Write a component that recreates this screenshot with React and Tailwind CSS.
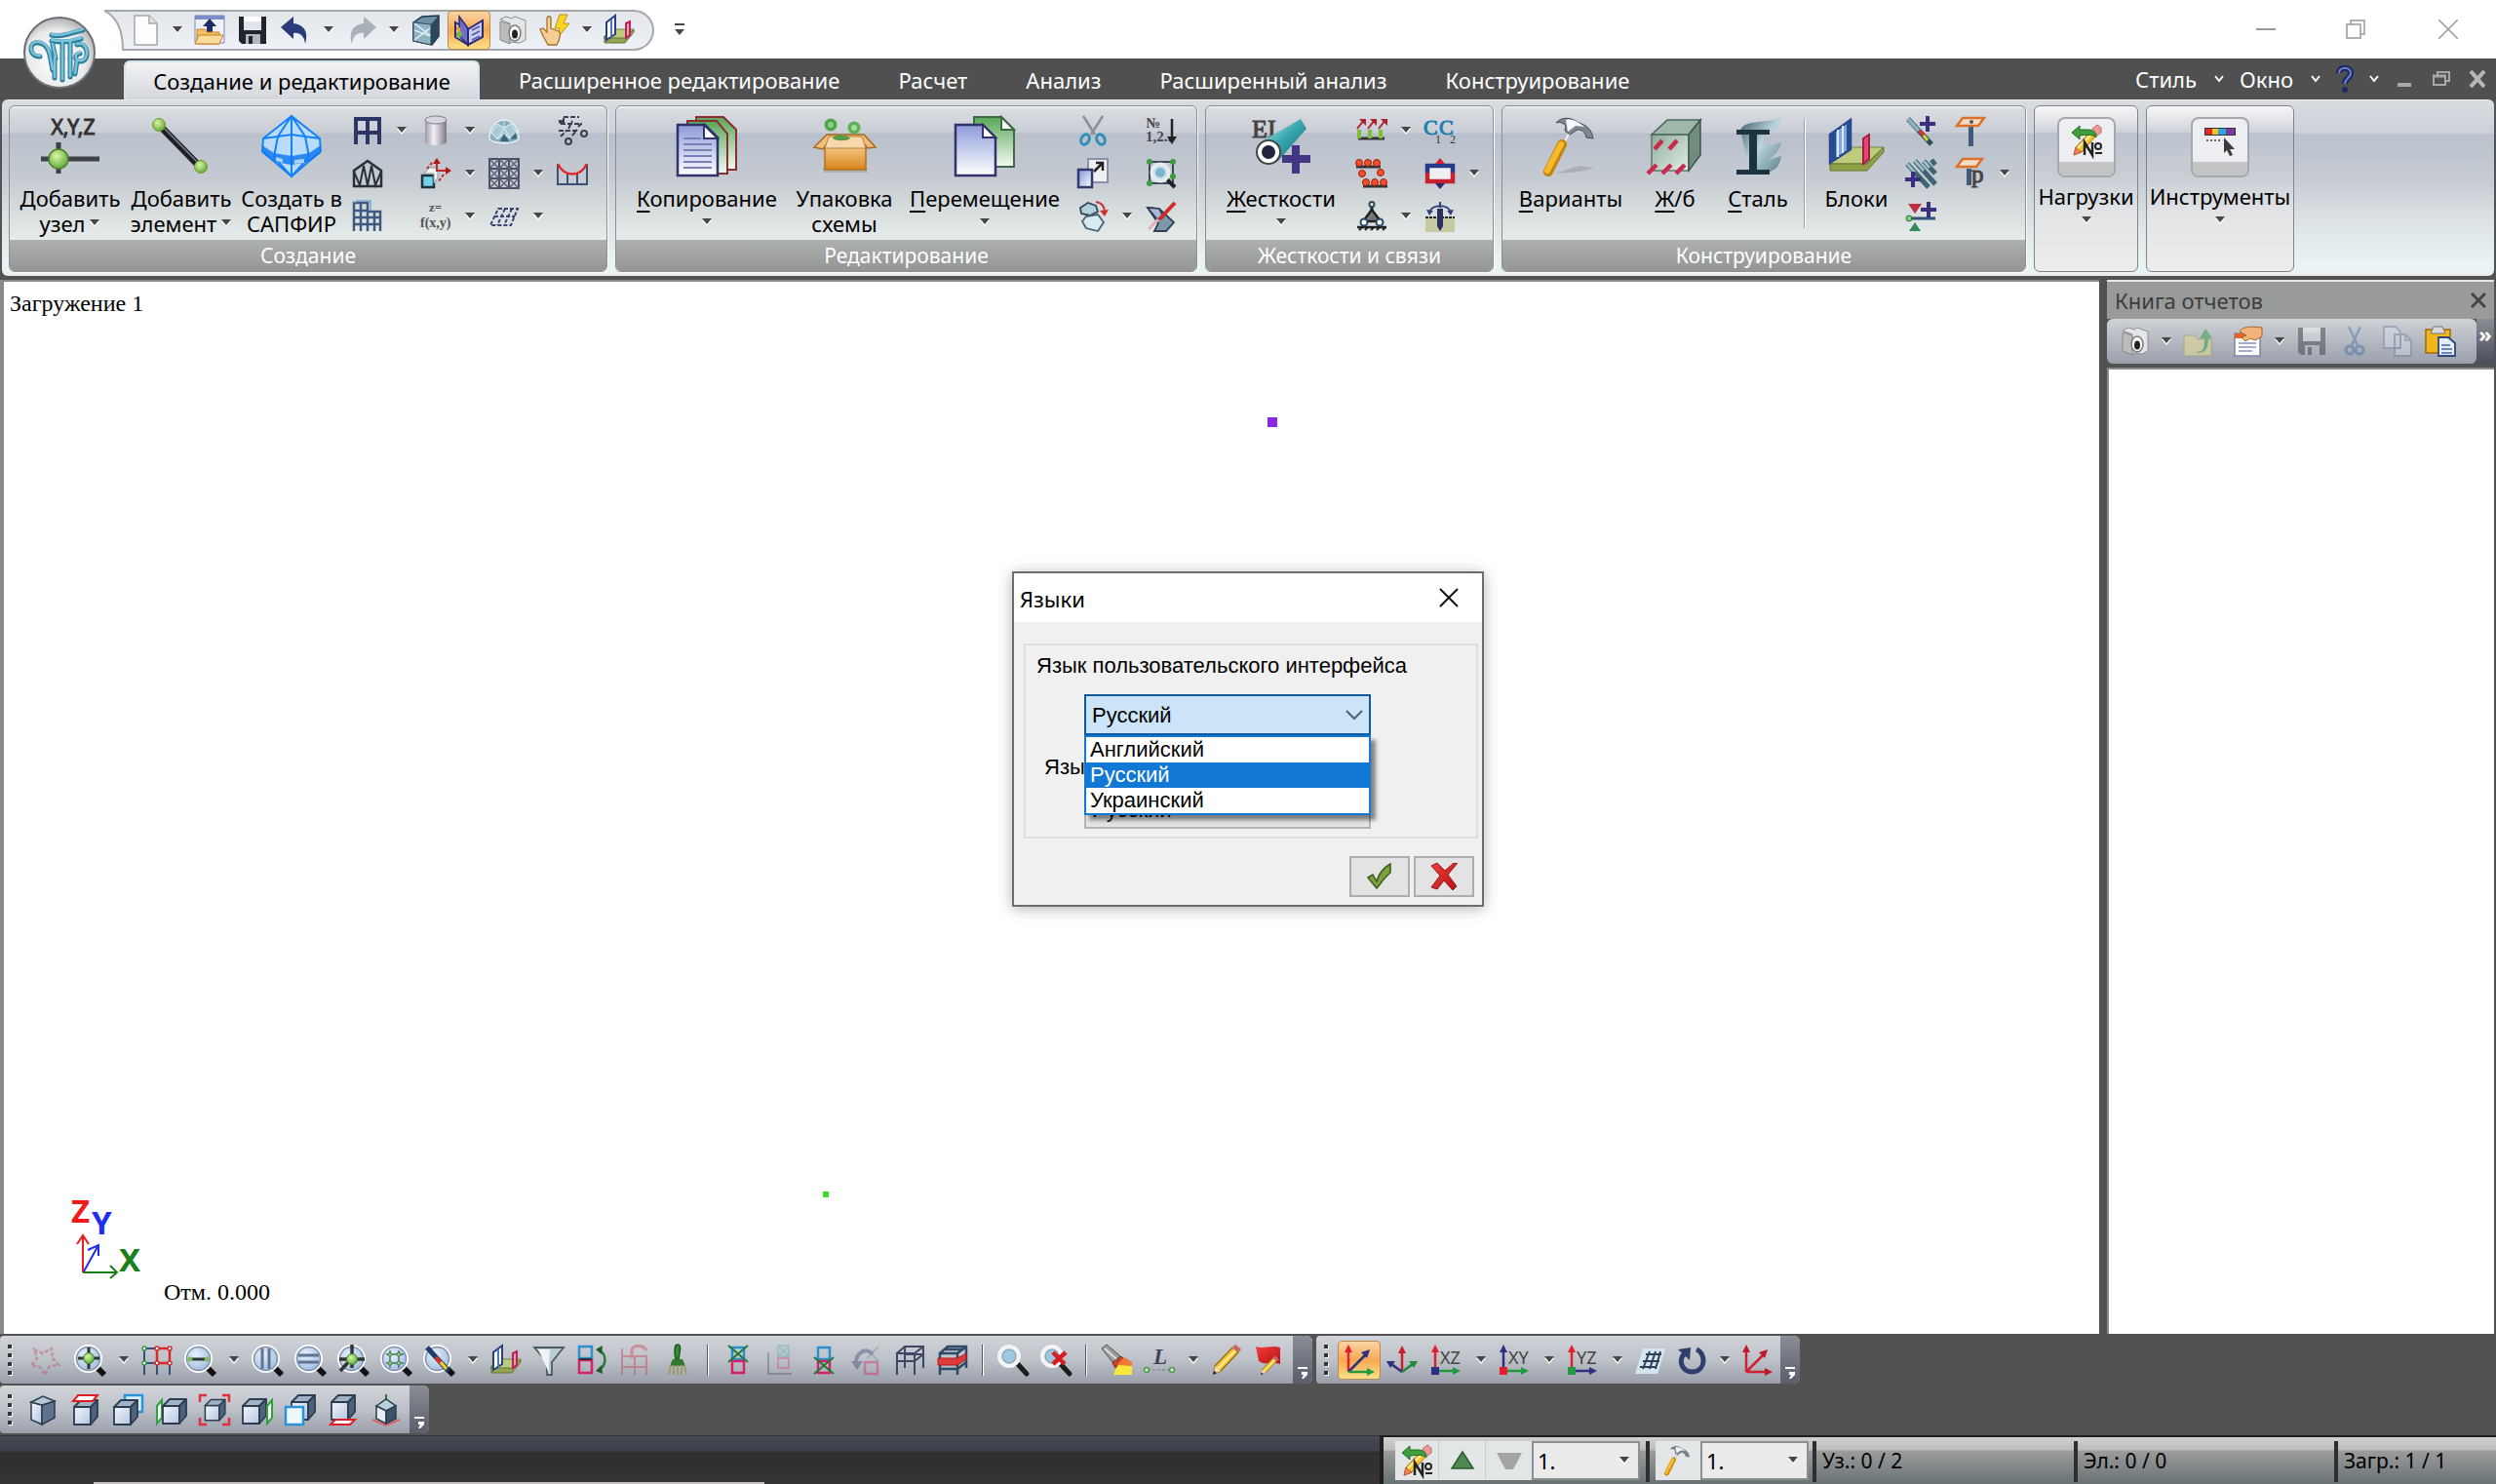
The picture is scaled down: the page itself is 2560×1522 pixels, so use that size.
import React from "react";

const Defs = () => (
  <svg width="0" height="0" className="absolute" aria-hidden="true">
    <defs>
      <linearGradient id="gBlue" x1="0" y1="0" x2="1" y2="1"><stop offset="0" stopColor="#7f95d6" /><stop offset="1" stopColor="#ffffff" /></linearGradient>
      <linearGradient id="gPage" x1="0" y1="0" x2="0" y2="1"><stop offset="0" stopColor="#8c9bd8" /><stop offset="1" stopColor="#ffffff" /></linearGradient>
      <linearGradient id="gPageG" x1="0" y1="0" x2="0" y2="1"><stop offset="0" stopColor="#58a858" /><stop offset="1" stopColor="#f4fbf4" /></linearGradient>
      <linearGradient id="gSteel" x1="0" y1="0" x2="1" y2="0"><stop offset="0" stopColor="#9c97a6" /><stop offset=".4" stopColor="#f4f2f6" /><stop offset="1" stopColor="#7d7886" /></linearGradient>
      <linearGradient id="gOrange" x1="0" y1="0" x2="0" y2="1"><stop offset="0" stopColor="#f7c98a" /><stop offset="1" stopColor="#d88418" /></linearGradient>
      <radialGradient id="gGreen" cx=".4" cy=".35" r=".7"><stop offset="0" stopColor="#d8f7a0" /><stop offset="1" stopColor="#5aa53a" /></radialGradient>
      <radialGradient id="gLens" cx=".4" cy=".35" r=".8"><stop offset="0" stopColor="#e8f1fb" /><stop offset="1" stopColor="#8fb0dc" /></radialGradient>
      <radialGradient id="gLogo" cx=".45" cy=".6" r=".65"><stop offset="0" stopColor="#ffffff" /><stop offset=".65" stopColor="#e9eaec" /><stop offset="1" stopColor="#a3a5a8" /></radialGradient>
      <linearGradient id="gCube" x1="0" y1="0" x2="1" y2="1"><stop offset="0" stopColor="#f4f8ff" /><stop offset="1" stopColor="#b4c3dc" /></linearGradient>
      <linearGradient id="gTeal" x1="0" y1="0" x2="1" y2="1"><stop offset="0" stopColor="#c8f2f4" /><stop offset=".5" stopColor="#35a5ad" /><stop offset="1" stopColor="#146a74" /></linearGradient>
      <linearGradient id="gBeam" x1="0" y1="0" x2="1" y2="1"><stop offset="0" stopColor="#3d5a66" /><stop offset=".5" stopColor="#b9d5dd" /><stop offset="1" stopColor="#5d7f8b" /></linearGradient>
      <linearGradient id="gConc" x1="0" y1="0" x2="1" y2="1"><stop offset="0" stopColor="#8eac9a" /><stop offset="1" stopColor="#e3efe8" /></linearGradient>
      <linearGradient id="gRed" x1="0" y1="0" x2="1" y2="1"><stop offset="0" stopColor="#f0403a" /><stop offset="1" stopColor="#b80f14" /></linearGradient>
      <linearGradient id="gQat" x1="0" y1="0" x2="0" y2="1"><stop offset="0" stopColor="#e3e7ec" /><stop offset="1" stopColor="#eef1f5" /></linearGradient>
    </defs>
  </svg>
);

const Svg = ({ children, size = "w-8 h-8", box = "0 0 32 32", faded, half }) => (
  <svg viewBox={box} className={`${size} shrink-0 overflow-visible ${faded ? "opacity-40" : ""} ${half ? "opacity-70" : ""}`} fill="none" aria-hidden="true">{children}</svg>
);

const Mag = ({ children }) => (
  <>
    <path d="M23 23l8 8" stroke="#111" strokeWidth="6" />
    <circle cx="14.500" cy="14.500" r="13" fill="url(#gLens)" stroke="#fff" strokeWidth="3" />
    <circle cx="14.500" cy="14.500" r="12" stroke="#7d8fa8" strokeWidth="1.500" />
    {children}
  </>
);

const Cube = ({ x = 3, y = 4 }) => (
  <g transform={`translate(${x} ${y})`} stroke="#2d3c50" strokeWidth="1.800" strokeLinejoin="round">
    <path d="M1 8h17v18H1z" fill="url(#gCube)" />
    <path d="M1 8l7-7h17l-7 7z" fill="#9fb2c6" />
    <path d="M18 8l7-7v17l-7 8z" fill="#4d637c" />
  </g>
);

const Axes = ({ up, right, dot, label }) => (
  <>
    <path d="M4 27V6" stroke={up} strokeWidth="2.500" /><path d="M0 8l4-8 4 8z" fill={up} />
    <path d="M4 27h20" stroke={right} strokeWidth="2.500" /><path d="M22 23l8 4-8 4z" fill={right} />
    <path d="M0 23h8v8H0z" fill={dot} />
    <text x="9" y="20" fontSize="18" fontFamily="Noto Sans" fill="#444">{label}</text>
  </>
);

const Disk = () => (
  <>
    <path d="M2 2h28v28H5l-3-3z" fill="#22262c" />
    <path d="M7 2h18v14H7z" fill="#dfe5ea" /><path d="M7 2h18v5H7z" fill="#fff" />
    <path d="M9 20h15v10H9z" fill="#aeb6be" /><path d="M12 22h4v8h-4z" fill="#22262c" />
  </>
);

const Plate = () => (
  <>
    <path d="M1 22l9-7h21l-9 10H1z" fill="#bccb7c" stroke="#75863c" strokeWidth="1" />
    <path d="M1 22v7h21l9-11v-3l-9 9H1z" fill="#93a456" stroke="#65762f" strokeWidth="1" />
    <path d="M3 8l9-7v19l-9 6z" fill="#fff" stroke="#2a3f80" strokeWidth="2" /><path d="M8 5v18" stroke="#4a79c0" strokeWidth="2" />
    <path d="M23 9l4-2v14l-4 3z" fill="#e8a0b4" stroke="#c0205a" strokeWidth="2" />
  </>
);

const Camera = () => (
  <>
    <path d="M4 7l10 3v20L4 26z" fill="#b9bdc0" stroke="#888" />
    <path d="M4 5l6-3 6 2 3-2 11 4v20l-6 3-10-1V9z" fill="#e3e5e6" stroke="#8b8f92" />
    <ellipse cx="19" cy="19" rx="6" ry="8" fill="#fafafa" stroke="#777" strokeWidth="1.500" /><ellipse cx="19" cy="20" rx="3" ry="4.500" fill="#222" />
  </>
);

const Pencil = () => (
  <>
    <path d="M3 30l1-8L22 3l6 5L10 27z" fill="#f6c52e" stroke="#8a6410" strokeWidth="1.200" />
    <path d="M7 25L25 6" stroke="#fff0a0" strokeWidth="2" />
    <path d="M3 30l1-8 6 5z" fill="#f6d7b0" /><path d="M2 31l1-4 3 2z" fill="#222" />
    <path d="M22 3l3-3 6 5-3 3z" fill="#e05a5a" stroke="#999" />
  </>
);

const Numbering = () => (
  <>
    <path d="M3 31l2-8L20 7l6 4L11 28z" fill="#f7c52a" stroke="#a5701a" /><path d="M3 31l2-8 6 5z" fill="#f0845a" stroke="#c05a3a" />
    <path d="M7 24L22 9" stroke="#fff0a0" strokeWidth="2" />
    <path d="M22 4l5-4 4 3v5l-4 3z" fill="#ef9a9a" stroke="#c06a6a" />
    <path d="M1 8l8-7v4h8c6 0 9 3 9 8-3-3-9-3-17-2v4z" fill="#3fa03a" stroke="#1e6a20" strokeWidth="1" />
    <path d="M14 31V18l8 13V18" stroke="#222" strokeWidth="2.500" /><circle cx="28" cy="22" r="3" stroke="#222" strokeWidth="2" /><path d="M25 29h7" stroke="#222" strokeWidth="2" />
  </>
);

const Hammer = () => (
  <>
    <path d="M31 17L24 31" stroke="#b9bfc6" strokeWidth="5" /><path d="M31 17L24 31" stroke="#eef1f4" strokeWidth="2" />
    <path d="M23 30L9 58" stroke="#c78510" strokeWidth="10" strokeLinecap="round" /><path d="M22 30L8 57" stroke="#f6b92a" strokeWidth="6" strokeLinecap="round" />
    <path d="M17 8c5-6 14-6 20-2l6 3c6 2 11 7 12 15l-7-1c-1-6-5-8-9-8l-8 5-5-4 1-5c-4-4-7-4-10-3z" fill="#7f8890" stroke="#444c55" strokeWidth="1" />
    <path d="M27 5c8-2 15 4 19 7l-9-1-8 6z" fill="#f5f7f8" />
  </>
);

const Box2 = ({ a, b, x }) => (
  <>
    <path d="M10 3h12v12H10z" stroke={a} strokeWidth="2.500" /><path d="M10 17h12v12H10z" stroke={b} strokeWidth="2.500" />
    {x === "top" && <path d="M6 1l20 17M26 1L6 18" stroke="#1c7a2c" strokeWidth="2" />}
    {x === "bottom" && <path d="M6 13l20 17M26 13L6 30" stroke="#1c7a2c" strokeWidth="2" />}
  </>
);

const ic = {
  page: <Svg><path d="M5 1h15l8 8v22H5z" fill="#fdfdfd" stroke="#a3a6aa" strokeWidth="1.500" /><path d="M20 1v8h8" fill="#e3e5e8" stroke="#a3a6aa" strokeWidth="1.500" /></Svg>,
  open: <Svg><path d="M1 1h30v28H1z" fill="#eef1fa" stroke="#7888b8" /><path d="M1 1h30v4H1z" fill="#7c8cc8" /><path d="M16 4l7 8h-4v9h-6v-9H9z" fill="#1f2b66" /><path d="M3 15h8l2 3h13v12H3z" fill="#f6c060" stroke="#c5802a" /><path d="M1 30l4-9h25l-4 9z" fill="#fbdc9a" stroke="#c5802a" /></Svg>,
  disk: <Svg><Disk /></Svg>,
  diskOff: <Svg faded><Disk /></Svg>,
  undo: <Svg><path d="M1 13L14 2v7c10 1 16 8 12 21-1-8-5-12-12-11v6z" fill="#2b3a78" /></Svg>,
  redo: <Svg><path d="M31 13L18 2v7C8 10 2 17 6 30c1-8 5-12 12-11v6z" fill="#a9b0b8" /></Svg>,
  glassCube: <Svg><path d="M3 8l9-6 17-1v21l-7 9-19-4z" fill="#6e90a6" stroke="#1e3044" strokeWidth="1.500" /><path d="M3 8l18 2v21L3 27z" fill="#8fb4c4" stroke="#334a5c" /><path d="M21 10l8-9v21l-8 9z" fill="#2e465c" /><path d="M4 16l16 6M4 26l16-12M4 9l16 12" stroke="#eef8fb" strokeWidth="1.200" /></Svg>,
  book: <Svg><path d="M2 8l13 8v15L2 23z" fill="#f3ecc4" stroke="#2b2a78" strokeWidth="2" /><path d="M6 2l9 12v17L6 22z" fill="#6f6fc4" stroke="#2b2a78" strokeWidth="1.500" /><path d="M15 15l15-9v17l-15 8z" fill="#c9cdf2" stroke="#2b2a78" strokeWidth="2" /><path d="M19 16l8-4M19 21l8-4M19 26l8-4" stroke="#5555a8" strokeWidth="1.500" /><circle cx="6" cy="20" r="3" fill="#7cb342" /><path d="M3 11l4 3v4l-4-2z" fill="#e8a33a" /></Svg>,
  camera: <Svg><Camera /></Svg>,
  hand: <Svg><path d="M21 0l8 0-4 9h6L17 26l4-12h-5z" fill="#f9d423" stroke="#c09010" /><path d="M9 31l-5-9-3-7 3-1 4 4V4c0-3 4-3 4 0v10l8 3c2 1 2 8-2 14z" fill="#f6cf94" stroke="#a5702c" strokeWidth="1.300" /></Svg>,
  plate: <Svg><Plate /></Svg>,
  frame: <Svg><path d="M4 30V4h24v26M16 4v26M4 18h24" stroke="#2d3566" strokeWidth="4" /></Svg>,
  truss: <Svg><path d="M2 29V13L16 3l14 10v16z" stroke="#2a3038" strokeWidth="2.500" /><path d="M2 14l6 14 4-20 4 20 4-20 4 20 6-14" stroke="#2a3038" strokeWidth="2" /></Svg>,
  building: <Svg><path d="M2 31V2h14v29M9 31V2M2 10h14M2 17h28M2 24h28M16 11h13v20M23 11v20" stroke="#3f5a80" strokeWidth="2.500" /><path d="M2 2l3-2h14v10" stroke="#7ba3d0" strokeWidth="1.500" /></Svg>,
  cylinder: <Svg><path d="M5 5v23c3 4 19 4 22 0V5z" fill="url(#gSteel)" /><ellipse cx="16" cy="5" rx="11" ry="4" fill="#d9d5de" stroke="#817c8a" /></Svg>,
  extrude: <Svg><path d="M2 18h12v12H2z" fill="#6fd3ea" stroke="#20303c" strokeWidth="2.500" /><path d="M4 16l5-6h9v10l-4 6V16z" fill="#f2f5f6" stroke="#8a97a0" /><path d="M17 3v10h11" stroke="#c02828" strokeWidth="2" /><path d="M24 17l-6 8M7 11l5-6" stroke="#c02828" strokeWidth="2" strokeDasharray="3 2" /><path d="M13 6l4-6 4 6zM26 9l6 4-6 4z" fill="#b01818" /></Svg>,
  zfxy: <Svg><text x="9" y="11" fontFamily="Liberation Serif" fontSize="13" fontWeight="bold" fill="#555">z=</text><text x="0" y="27" fontFamily="Liberation Serif" fontSize="14" fontWeight="bold" fill="#555">f(x,y)</text></Svg>,
  dome: <Svg><path d="M1 25C1 13 8 5 16 5s15 8 15 20c-7 5-23 5-30 0z" fill="#86adbd" stroke="#e4f2f6" strokeWidth="1.500" /><path d="M3 18l6-9 7 4 7-4 6 9-6 7-7-6-7 6z" fill="#a9cbd7" stroke="#e8f5f8" /><path d="M16 6v7M9 25l7-12 7 12" stroke="#d4e8ee" /><path d="M12 27l4-8 5 8zM22 25l6-7 1 6z" fill="#3d6678" /></Svg>,
  mesh: <Svg><path d="M1 1h30v30H1zM11 1v30M21 1v30M1 11h30M1 21h30" stroke="#4b4f66" strokeWidth="2" /><path d="M1 11L11 1M1 21L21 1M1 31L31 1M11 31L31 11M21 31l10-10M21 1l10 10M11 1l20 20M1 1l30 30M1 11l20 20M1 21l10 10" stroke="#5d6178" strokeWidth="1.500" /></Svg>,
  planeGrid: <Svg><path d="M10 8h20l-7 17H2zM6 16h21M17 8L9 25M24 8l-8 17" stroke="#3c4572" strokeWidth="2" strokeDasharray="4 2" /></Svg>,
  dxf: <Svg><path d="M7 2h16M2 6h5M4 9h22M2 16h20M7 3v5M12 14l4-8M22 12l5-5M4 22l6-6M16 21l5-6" stroke="#3a4050" strokeWidth="2" strokeDasharray="5 2" /><circle cx="12" cy="27" r="3" stroke="#3a4050" strokeWidth="2" /><circle cx="28" cy="19" r="3" stroke="#3a4050" strokeWidth="2" /><circle cx="4" cy="7" r="2" fill="#3a4050" /></Svg>,
  catenary: <Svg><path d="M1 6v21h30V6M11 15v12M21 15v12" stroke="#3a5078" strokeWidth="2" /><path d="M1 6c7 14 23 14 30 0" stroke="#e02828" strokeWidth="2.500" /></Svg>,
  scissors: <Svg><path d="M6 1l12 19M26 1L14 20" stroke="#8a9096" strokeWidth="2.500" /><ellipse cx="8" cy="25" rx="4" ry="5.500" transform="rotate(25 8 25)" stroke="#2e8fb8" strokeWidth="3" /><ellipse cx="24" cy="25" rx="4" ry="5.500" transform="rotate(-25 24 25)" stroke="#2e8fb8" strokeWidth="3" /></Svg>,
  scissorsOff: <Svg faded><path d="M10 1l9 19M22 1l-9 19" stroke="#3b6aa5" strokeWidth="2.500" /><circle cx="11" cy="25" r="4" stroke="#3465a8" strokeWidth="3" /><circle cx="21" cy="25" r="4" stroke="#3465a8" strokeWidth="3" /></Svg>,
  scale: <Svg><path d="M11 1h20v24H11z" fill="#eef0f4" stroke="#8a90a8" strokeWidth="2" /><path d="M1 12h14v18H1z" fill="url(#gBlue)" stroke="#33396e" strokeWidth="2.500" /><path d="M17 14l8-8M19 5h7v8" stroke="#222" strokeWidth="2.500" /></Svg>,
  rotate: <Svg><path d="M3 7l8-5 8 3 2 6-8 4-9-2z" fill="#b3cfd8" stroke="#30485a" strokeWidth="1.800" /><path d="M9 16l12-2 6 8-6 9-12-3-4-7z" fill="#d7ecf2" stroke="#4a6274" strokeWidth="1.800" /><path d="M19 1c7 1 9 6 9 11" stroke="#d03030" strokeWidth="2" /><path d="M23 10l5 6 4-7z" fill="#d03030" /></Svg>,
  number: <Svg><text x="0" y="13" fontFamily="Liberation Serif" fontSize="15" fontWeight="bold" fill="#44484c">№</text><text x="0" y="27" fontFamily="Liberation Serif" fontSize="15" fontWeight="bold" fill="#44484c">1,2..</text><path d="M27 4v20" stroke="#222" strokeWidth="2.500" /><path d="M22 22h10l-5 8z" fill="#222" /></Svg>,
  fit: <Svg><path d="M4 4h24v22H4z" stroke="#3a4a5c" strokeWidth="2" /><path d="M22 22l8 8" stroke="#222" strokeWidth="4" /><circle cx="15" cy="15" r="9" fill="#cfe2ea" stroke="#e8ecee" strokeWidth="3" /><circle cx="15" cy="15" r="5" fill="#7fb4d0" /><g fill="#3e9a3e"><circle cx="4" cy="4" r="3" /><circle cx="28" cy="4" r="3" /><circle cx="4" cy="26" r="3" /><circle cx="28" cy="19" r="3" /></g></Svg>,
  cutPlate: <Svg><path d="M2 7l12 1 15 14-8 9H9l4-8z" fill="#7d97ac" stroke="#2d3e50" strokeWidth="1.800" /><path d="M2 7l12 1 4 9-6 2z" fill="#a9b6d8" stroke="#2d3e50" strokeWidth="1.500" /><path d="M30 2L14 19" stroke="#d02a2a" strokeWidth="4" /><path d="M13 19L3 29" stroke="#e8b0b0" strokeWidth="3" /></Svg>,
  loads: <Svg><path d="M2 24h27" stroke="#333" strokeWidth="3" /><path d="M3 24v-9M14 24v-9M25 24v-9" stroke="#7cc030" strokeWidth="4" /><path d="M1 14l7-9M12 14l7-9M23 14l7-9" stroke="#b02030" strokeWidth="2" /><path d="M3 4h7v7zM14 4h7v7zM25 4h7v7z" fill="#b02030" /></Svg>,
  nodes: <Svg><path d="M0 9h25M7 29h25" stroke="#333" strokeWidth="3" /><g fill="#f0502a" stroke="#a01c10"><circle cx="3" cy="5" r="3.500" /><circle cx="12" cy="5" r="3.500" /><circle cx="21" cy="5" r="3.500" /><circle cx="6" cy="16" r="3.500" /><circle cx="25" cy="15" r="3.500" /><circle cx="10" cy="25" r="3.500" /><circle cx="19" cy="25" r="3.500" /><circle cx="28" cy="25" r="3.500" /></g></Svg>,
  support: <Svg><path d="M16 4v7" stroke="#222" strokeWidth="3" /><path d="M16 9l-9 12h18z" fill="#777" stroke="#222" strokeWidth="2.500" /><path d="M1 27h30" stroke="#222" strokeWidth="2.500" /><path d="M3 30l3-3M9 30l3-3M15 30l3-3M21 30l3-3M27 30l3-3" stroke="#222" strokeWidth="2" /><g fill="#fff" stroke="#234a60" strokeWidth="2"><circle cx="16" cy="3.500" r="2.500" /><circle cx="8" cy="22" r="3.500" /><circle cx="24" cy="22" r="3.500" /></g></Svg>,
  c1c2: <Svg><text x="-1" y="20" fontFamily="Liberation Serif" fontSize="22" fill="#1d7fb0" stroke="#1d7fb0">C</text><text x="15" y="20" fontFamily="Liberation Serif" fontSize="22" fill="#1d7fb0" stroke="#1d7fb0">C</text><text x="11" y="29" fontFamily="Liberation Serif" fontSize="12" fill="#333">1</text><text x="26" y="29" fontFamily="Liberation Serif" fontSize="12" fill="#333">2</text></Svg>,
  twoColor: <Svg><path d="M3 8h26v16H3z" fill="#eef0f4" /><path d="M3 15V8h26v7" stroke="#2b3a88" strokeWidth="4.500" /><path d="M3 15v9h26v-9" stroke="#c8202c" strokeWidth="4.500" /><path d="M11 6l5-6 5 6z" fill="#d82030" /><path d="M11 26l5 6 5-6z" fill="#2b2a70" /></Svg>,
  pile: <Svg><path d="M1 17h30v15H1z" fill="#c4c9a2" /><path d="M1 17h30" stroke="#222" strokeWidth="2" strokeDasharray="3 1" /><path d="M13 8h6v18l-3 5-3-5z" fill="#2b2f5c" /><path d="M5 12c2-9 20-9 22 0M16 1v6" stroke="#33407c" strokeWidth="2" /><path d="M2 9l3 6 4-5zM30 9l-3 6-4-5z" fill="#33407c" /></Svg>,
  barPlus: <Svg><path d="M3 4l24 26" stroke="#2d4e5c" strokeWidth="5" /><path d="M3 4l11 12" stroke="#8fb2be" strokeWidth="4" /><path d="M15 16l5 6" stroke="#d03a3a" strokeWidth="4" /><path d="M19 21l4 5" stroke="#c8d838" strokeWidth="3" /><path d="M23 1v16M15 9h16" stroke="#3b2f80" strokeWidth="4" /></Svg>,
  barsPlus: <Svg><path d="M2 6l22 24M10 3l21 24M19 3l12 13M27 2l4 5" stroke="#3f6474" strokeWidth="5" /><path d="M2 6l8 9M10 3l9 10M19 3l6 7" stroke="#9dbac4" strokeWidth="3" /><path d="M8 14v16M0 22h16" stroke="#3b2f80" strokeWidth="4" /></Svg>,
  nodePlus: <Svg><path d="M3 3h14l-7 10z" fill="#c03040" /><path d="M4 31l6-9 6 9z" fill="#2e8a5a" /><path d="M4 18h27" stroke="#34507c" strokeWidth="3" /><circle cx="4" cy="18" r="3" fill="#7fcf7a" stroke="#2a6a2a" /><path d="M24 1v16M16 9h16" stroke="#3b2f80" strokeWidth="4" /></Svg>,
  tBeam: <Svg><path d="M14 12h5v20h-5z" fill="#3f5a7c" /><path d="M8 3h22l-6 8H2z" fill="#f4ddc8" stroke="#dd7028" strokeWidth="2.500" /><circle cx="17" cy="7" r="2" fill="#555" /></Svg>,
  tpBeam: <Svg><path d="M12 11h5v17h-5z" fill="#3f5a7c" /><path d="M8 1h20l-6 8H2z" fill="#f4ddc8" stroke="#dd7028" strokeWidth="2.500" /><text x="17" y="25" fontFamily="Liberation Serif" fontSize="25" fill="#444" stroke="#444">p</text></Svg>,
  starOff: <Svg faded><path d="M5 5l9 4 9-5 1 10 6 7-9 1-5 9-5-8-9-2 6-7z" stroke="#c04858" strokeWidth="2.500" strokeDasharray="4 2" /></Svg>,
  magNode: <Svg><Mag><path d="M15 3v22M4 14h22" stroke="#333" strokeWidth="3" /><circle cx="15" cy="14" r="5.500" fill="url(#gGreen)" stroke="#3c7a2a" /></Mag></Svg>,
  frameRed: <Svg><path d="M3 31V4h12M3 19h12M16 31V20M29 31V20" stroke="#33507c" strokeWidth="2" /><path d="M16 4h13v15H16z" stroke="#d82a2a" strokeWidth="2.500" /><g fill="#fff" stroke="#3c9a4a" strokeWidth="1.500"><circle cx="3" cy="4" r="2" /><circle cx="3" cy="19" r="2" /></g><g fill="#fff" stroke="#d82a2a" strokeWidth="1.500"><circle cx="16" cy="4" r="2" /><circle cx="29" cy="4" r="2" /><circle cx="16" cy="19" r="2" /><circle cx="29" cy="19" r="2" /></g></Svg>,
  magBar: <Svg><Mag><path d="M6 15h17" stroke="#333" strokeWidth="3" /><circle cx="6" cy="15" r="2.500" fill="#7cc05a" /><circle cx="23" cy="15" r="2.500" fill="#7cc05a" /></Mag></Svg>,
  magV: <Svg><Mag><path d="M11 4v21M18 4v21" stroke="#5d7590" strokeWidth="3" /></Mag></Svg>,
  magH: <Svg><Mag><path d="M4 11h21M4 18h21" stroke="#5d7590" strokeWidth="3" /></Mag></Svg>,
  magAxes: <Svg><Mag><path d="M15 0v24M2 15h26M14 15L3 27" stroke="#333" strokeWidth="3.500" /><circle cx="15" cy="15" r="5.500" fill="url(#gGreen)" stroke="#3c7a2a" /></Mag></Svg>,
  magGrid: <Svg><Mag><path d="M10 6v18M19 6v18M6 10h18M6 19h18" stroke="#4b6a7c" strokeWidth="1.500" /><g fill="#8fd07a" stroke="#3f8a3a"><circle cx="10" cy="10" r="2" /><circle cx="19" cy="10" r="2" /><circle cx="10" cy="19" r="2" /><circle cx="19" cy="19" r="2" /></g></Mag></Svg>,
  magPen: <Svg><Mag><path d="M4 3l22 24" stroke="#1f3f6a" strokeWidth="5" /><path d="M13 13l7 8" stroke="#d83030" strokeWidth="4" /><path d="M18 18l6 7" stroke="#f0d020" strokeWidth="3" /></Mag></Svg>,
  funnel: <Svg><path d="M1 3h30L19 18v13h-5V18z" fill="#b9ccd0" stroke="#4a5c62" strokeWidth="1.800" /><path d="M5 5h12l-1 14v10" fill="#eef4f5" /></Svg>,
  swap: <Svg><path d="M3 2h13v12H3z" stroke="#2a90d0" strokeWidth="2.500" /><path d="M3 16h13v13H3z" stroke="#d8206a" strokeWidth="2.500" /><path d="M3 15h13" stroke="#333" strokeWidth="2" /><path d="M23 5c9 5 8 17 0 21" stroke="#2a7a3a" strokeWidth="2.500" /><path d="M27 1l-7 4 6 5zM27 30l-7-3 6-6z" fill="#1c5a28" /></Svg>,
  undoFrameOff: <Svg faded><path d="M3 12h13v11H3zM16 12h12v11H16M3 23v8M16 23v8M28 23v8M3 4v8" stroke="#c83848" strokeWidth="2" /><path d="M13 14V6c0-6 12-6 15 0" stroke="#d03848" strokeWidth="3" /></Svg>,
  brush: <Svg><path d="M16 0c3 0 3 4 2 9l-1 6h-3l-1-6c0-5 0-9 3-9z" fill="#3a8a3a" stroke="#1c5a1c" strokeWidth="1.500" /><path d="M11 15h10l3 7H8z" fill="#2f7a2f" /><path d="M9 21l-2 10M12 21v10M16 21v10M20 21v10M23 21l2 10" stroke="#9a9a6a" strokeWidth="2" /></Svg>,
  boxX1: <Svg><Box2 a="#2a8fd0" b="#d8206a" x="top" /></Svg>,
  boxAxisOff: <Svg faded><path d="M3 8v22h24" stroke="#505a66" strokeWidth="2" /><path d="M13 14h11v10H13z" stroke="#d84a7a" strokeWidth="2" /><path d="M13 1h11v11H13zM13 1l11 11M24 1L13 12" stroke="#50a8b0" strokeWidth="1.500" /></Svg>,
  boxX2: <Svg><Box2 a="#2a8fd0" b="#d8206a" x="bottom" /></Svg>,
  undoBoxOff: <Svg faded><path d="M14 18h13v12H14z" stroke="#d8206a" strokeWidth="2.500" /><path d="M16 14L28 2M16 5l12 12" stroke="#4a9a5a" strokeWidth="1.500" /><path d="M5 20C4 8 16 2 22 10" stroke="#3c3f78" strokeWidth="4" /><path d="M0 17h12l-6 9z" fill="#3c3f78" /></Svg>,
  frame3d: <Svg><path d="M3 31V9h18v22M3 9l8-7h19v22M21 9l9-7M3 17h18l9-7M11 2v22M30 10H11" stroke="#3d4763" strokeWidth="2" /></Svg>,
  frame3dRed: <Svg><path d="M3 31V9h18v22M3 9l8-7h19v22M21 9l9-7M3 25h18l9-7M7 5h20" stroke="#2f4a66" strokeWidth="2.500" /><path d="M1 14h20l9-5v6l-9 6H1z" fill="#e03a3a" stroke="#a81c1c" /></Svg>,
  mag: <Svg><path d="M19 18l11 12" stroke="#1c1c1c" strokeWidth="5" strokeLinecap="round" /><circle cx="12" cy="12" r="10" fill="#cfe2ee" stroke="#f4f4f4" strokeWidth="4" /><circle cx="12" cy="12" r="7" fill="#9cc8e0" stroke="#7f94a0" /></Svg>,
  magX: <Svg><path d="M19 18l11 12" stroke="#1c1c1c" strokeWidth="5" strokeLinecap="round" /><circle cx="12" cy="12" r="10" fill="#cfe2ee" stroke="#f4f4f4" strokeWidth="4" /><circle cx="12" cy="12" r="7" fill="#9cc8e0" stroke="#7f94a0" /><path d="M13 8l12 12M26 8L13 20" stroke="#d81c24" strokeWidth="4.500" /></Svg>,
  torch: <Svg><path d="M1 4l5-4 14 12-8 6z" fill="#9a9a9a" stroke="#555" /><path d="M4 4l12 11" stroke="#dcdcdc" strokeWidth="2" /><path d="M12 19l9-7 3 3-9 9z" fill="#c8462a" stroke="#7a2a18" /><path d="M13 31l4-9 7-8 8 4v13z" fill="#f8e83c" /><path d="M17 21l7-8 8 5v4z" fill="#f07838" /></Svg>,
  length: <Svg><text x="10" y="20" fontFamily="Liberation Serif" fontStyle="italic" fontWeight="bold" fontSize="23" fill="#3f4458">L</text><path d="M4 26h24" stroke="#8a8f9c" strokeWidth="1.500" strokeDasharray="3 2" /><circle cx="3" cy="26" r="2.500" fill="#cfe8c8" stroke="#4a9a4a" strokeWidth="1.500" /><circle cx="29" cy="26" r="2.500" fill="#cfe8c8" stroke="#4a9a4a" strokeWidth="1.500" /></Svg>,
  pencil: <Svg><Pencil /></Svg>,
  redPen: <Svg><path d="M2 2c8 3 16-2 25 1v17c-8-3-14 2-22-3z" fill="url(#gRed)" /><g transform="translate(6 12) scale(.62)"><Pencil /></g></Svg>,
  axisXyz: <Svg><path d="M5 28V6" stroke="#e0202c" strokeWidth="2.500" /><path d="M1 8l4-8 4 8z" fill="#e0202c" /><path d="M5 28L22 11" stroke="#2d2f80" strokeWidth="2.500" /><path d="M18 8l9-3-3 9z" fill="#2d2f80" /><path d="M5 28h20" stroke="#1f9a40" strokeWidth="2.500" /><path d="M24 24l8 4-8 4z" fill="#1f9a40" /></Svg>,
  axisIso: <Svg><path d="M16 28V8" stroke="#c8202c" strokeWidth="2.500" /><path d="M12 9l4-8 4 8z" fill="#c8202c" /><path d="M16 28L5 20" stroke="#2d2f80" strokeWidth="2.500" /><path d="M0 17h9l-5 7z" fill="#2d2f80" /><path d="M16 28l11-8" stroke="#1f8a40" strokeWidth="2.500" /><path d="M32 17h-9l5 7z" fill="#1f8a40" /></Svg>,
  xz: <Svg><Axes up="#e0202c" right="#1f9a40" dot="#2d2f80" label="XZ" /></Svg>,
  xy: <Svg><Axes up="#2d2f80" right="#1f9a40" dot="#e0202c" label="XY" /></Svg>,
  yz: <Svg><Axes up="#e0202c" right="#2d2f80" dot="#1f9a40" label="YZ" /></Svg>,
  slab: <Svg><path d="M9 4h23l-8 26H1z" fill="#d3e8ee" /><path d="M12 10h16M9 17h17M6 23h17M16 7L9 25M22 7l-6 18M27 7l-5 18" stroke="#2f3d58" strokeWidth="2" /></Svg>,
  spin: <Svg><path d="M20 5c10 4 10 22-4 23C4 28 1 15 8 9" stroke="#2f3f6c" strokeWidth="5" /><path d="M1 5l13-2-1 13z" fill="#2f3f6c" /></Svg>,
  axisRed: <Svg><path d="M5 28V6M5 28L22 11M5 28h20" stroke="#d02030" strokeWidth="2.500" /><path d="M1 8l4-8 4 8zM18 8l9-3-3 9zM24 24l8 4-8 4z" fill="#c01828" /></Svg>,
  c0: <Svg><path d="M4 8l11 3v20L4 26z" fill="url(#gCube)" stroke="#2d3c50" strokeWidth="1.500" /><path d="M15 11l13-4v17l-13 7z" fill="#5d748c" stroke="#2d3c50" strokeWidth="1.500" /><path d="M4 8l12-6 12 5-13 4z" fill="#b8c8d6" stroke="#2d3c50" strokeWidth="1.500" /></Svg>,
  c1: <Svg><Cube x={3} y={5} /><path d="M8 1h20l-5 6H3z" fill="#fff" stroke="#e01c24" strokeWidth="2" /></Svg>,
  c2: <Svg><path d="M12 1h18v17H12z" fill="#d8efff" stroke="#2a94d8" strokeWidth="2.500" /><Cube x={0} y={5} /></Svg>,
  c3: <Svg><path d="M1 12l5-6v18l-5 6z" fill="#fff" stroke="#2fa03a" strokeWidth="2" /><Cube x={6} y={4} /></Svg>,
  c4: <Svg><g transform="translate(3 3) scale(.85)"><Cube x={3} y={2} /></g><path d="M1 8V1h7M24 1h7v7M31 24v7h-7M8 31H1v-7" stroke="#e0303a" strokeWidth="2.500" /></Svg>,
  c5: <Svg><Cube x={0} y={4} /><path d="M26 12l5-6v18l-5 6z" fill="#fff" stroke="#2fa03a" strokeWidth="2" /></Svg>,
  c6: <Svg><Cube x={6} y={0} /><path d="M1 13h18v18H1z" fill="#eef8ff" stroke="#2a94d8" strokeWidth="2.500" /></Svg>,
  c7: <Svg><Cube x={3} y={0} /><path d="M8 26h20l-5 5H3z" fill="#fff" stroke="#e01c24" strokeWidth="2" /></Svg>,
  c8: <Svg><path d="M3 27l13-22 13 22z" stroke="#88c890" strokeWidth="1.500" /><path d="M2 26l14 6 14-6" stroke="#e06070" strokeWidth="2" /><path d="M16 0v6" stroke="#2a7a3a" strokeWidth="2" /><path d="M6 12l10-7 10 7-10 5z" fill="#b7d4dc" stroke="#2d3c50" strokeWidth="1.500" /><path d="M6 12l10 5v13L6 25z" fill="#e6eef4" stroke="#2d3c50" strokeWidth="1.500" /><path d="M26 12l-10 5v13l10-5z" fill="#3d5266" stroke="#2d3c50" strokeWidth="1.500" /></Svg>,
  folderUp: <Svg half><path d="M1 10h11l3 4h14v17H1z" fill="#d9d39c" stroke="#a5a26c" /><path d="M14 27c8 0 8-6 8-14h-5l6-10 7 10h-4c0 12-4 15-12 15z" fill="#5aa868" /></Svg>,
  props: <Svg><path d="M3 8h26v23H3z" fill="#fff" stroke="#7d86b0" strokeWidth="1.500" /><path d="M3 8h26v5H3z" fill="#e2622c" /><path d="M7 18h18M7 22h18M7 26h14" stroke="#8b90c4" strokeWidth="1.500" /><path d="M8 6c3-5 8-4 12-5l11 1v9l-7 4-5-2-5 3-4-4 5-2z" fill="#f2b47a" stroke="#a5642c" /></Svg>,
  copyOff: <Svg faded><path d="M2 1h12l5 5v17H2zM13 9h11l6 6v16H13z" fill="#dfe6f2" stroke="#6a7aa0" strokeWidth="1.800" /><path d="M24 9v6h6" stroke="#6a7aa0" strokeWidth="1.500" /></Svg>,
  paste: <Svg><path d="M1 4h25v24H1z" fill="#f2b51c" stroke="#9a6b10" strokeWidth="1.500" /><path d="M9 1h9l3 7H6z" fill="#d9d9d9" stroke="#777" /><path d="M14 12h10l7 6v13H14z" fill="#e6eefb" stroke="#2d4778" strokeWidth="1.800" /><path d="M17 20h9M17 24h11M17 28h11" stroke="#3f63a8" strokeWidth="1.500" /></Svg>,
};

const L = "w-16 h-16";
const LB = "0 0 64 64";
const big = {
  node: <Svg size={L} box={LB}><text x="35" y="20" textAnchor="middle" fontFamily="Noto Sans" fontSize="21" fill="#333" stroke="#333">X,Y,Z</text><path d="M2 45h60M20 28v32" stroke="#3d4246" strokeWidth="5" /><circle cx="20" cy="45" r="10" fill="url(#gGreen)" stroke="#4f7f2c" strokeWidth="1.500" /></Svg>,
  bar: <Svg size={L} box={LB}><path d="M9 10l42 43" stroke="#1d2126" strokeWidth="7" /><path d="M10 9l42 43" stroke="#7d858c" strokeWidth="1.500" /><circle cx="9" cy="10" r="6.500" fill="url(#gGreen)" stroke="#6f9a28" /><circle cx="52" cy="53" r="6.500" fill="url(#gGreen)" stroke="#6f9a28" /></Svg>,
  sapfir: <Svg size={L} box={LB}><path d="M32 1L3 24l-1 13 30 26 30-26-1-13z" fill="#b9dcfb" /><path d="M32 1L3 24l-1 13 30 26 30-26-1-13zM32 1L18 22l-4 21 18 20 18-20-4-21zM32 1v62M3 24l15-2 14-2 14 2 15 2" stroke="#1682f8" strokeWidth="2" /><path d="M2 31l12 8 18 3 18-3 12-8v8l-12 9-18 3-18-3L2 39z" fill="#1479f2" opacity=".85" /><path d="M16 43l7 2v4l-7-2zM35 46l10-1v4l-10 1z" fill="#a8d4fb" /></Svg>,
  copy: <Svg size={L} box={LB}><path d="M21 2h28l13 13v41H21z" fill="url(#gPageG)" stroke="#8c2c34" strokeWidth="2" /><path d="M12 6h30l11 13v41H12z" fill="url(#gPageG)" stroke="#8c2c34" strokeWidth="2" /><path d="M2 10h28l13 13v39H2z" fill="url(#gPage)" stroke="#33316e" strokeWidth="2.500" /><path d="M29 10v14h14z" fill="#fff" stroke="#33316e" strokeWidth="2" /><path d="M8 24h18M8 30h29M8 36h29M8 42h29M8 48h29M8 54h29" stroke="#7d80b4" strokeWidth="2" /></Svg>,
  pack: <Svg size={L} box={LB}><path d="M10 54h46v5H10z" fill="#999" opacity=".5" /><path d="M12 32h42v24H12z" fill="url(#gOrange)" stroke="#b0701c" strokeWidth="1.500" /><path d="M14 20h38l12 13-8 1-6-7H16l-6 8-9-2z" fill="#efbd7c" stroke="#a86a20" strokeWidth="1.500" /><path d="M16 22h34l4 12H12z" fill="#f6d8ac" stroke="#b88038" /><path d="M20 24c2-5 14-5 18 0-4 3-14 3-18 0z" fill="#5a9a48" /><circle cx="18" cy="10" r="6.500" fill="#4fa44a" /><circle cx="18" cy="10" r="3" fill="#8cd080" /><circle cx="42" cy="13" r="6.500" fill="#5cb055" /><circle cx="42" cy="13" r="3" fill="#a4dc98" /></Svg>,
  move: <Svg size={L} box={LB}><path d="M21 2h28l13 13v38H21z" fill="url(#gPageG)" stroke="#3d6a44" strokeWidth="2" /><path d="M49 2v13h13z" fill="#fff" stroke="#3d6a44" strokeWidth="2" /><path d="M2 10h28l13 13v39H2z" fill="url(#gPage)" stroke="#33316e" strokeWidth="2.500" /><path d="M30 10v13h13z" fill="#fff" stroke="#33316e" strokeWidth="2" /></Svg>,
  stiff: <Svg size={L} box={LB}><text x="2" y="23" fontFamily="Liberation Serif" fontSize="26" fill="#444" stroke="#444">EI</text><path d="M10 28L52 4l6 10-30 34z" fill="url(#gTeal)" /><ellipse cx="19" cy="38" rx="12" ry="12" fill="#fff" stroke="#444" strokeWidth="2" /><circle cx="19" cy="38" r="7" fill="#20243c" /><path d="M47 31v29M33 45h29" stroke="#413786" strokeWidth="8" /></Svg>,
  hammer: <Svg size={L} box={LB}><path d="M16 60c16-1 30-2 40-6l-16-2z" fill="#888" opacity=".4" /><Hammer /></Svg>,
  concrete: <Svg size={L} box={LB}><path d="M8 20h38v37H8z" fill="url(#gConc)" stroke="#5c776a" strokeWidth="1.500" /><path d="M8 20L24 5h34L46 20z" fill="#9db8a8" stroke="#4a6558" strokeWidth="1.500" /><path d="M46 20L58 5v36L46 57z" fill="#6f8c7e" stroke="#3d584b" strokeWidth="1.500" /><path d="M11 35l8-9M26 35l8-9M4 60l9-9M19 60l9-9M33 60l9-9" stroke="#c82a4c" strokeWidth="4.500" /></Svg>,
  steel: <Svg size={L} box={LB}><path d="M14 15C20 4 36 10 56 2c-2 12-8 16-18 18v12l18-4c-2 10-8 14-14 18l14-4c-2 12-6 14-14 17H24z" fill="url(#gBeam)" /><path d="M10 15h34v5H31v36h13v5H10v-5h13V20H10z" fill="#1d3340" /></Svg>,
  blocks: <Svg size={L} box={LB}><path d="M5 46l12-13h43L42 50H5z" fill="#bccb7c" stroke="#75863c" /><path d="M5 46v11h38l17-19v-5L43 50H5z" fill="#8da048" stroke="#65762f" /><path d="M5 20L26 5v30L5 49z" fill="#7fa8e0" stroke="#27488e" strokeWidth="2.500" /><path d="M5 20l6-4v29l-6 4zM22 8l4-3v30l-4 3z" fill="#274c94" /><path d="M13 15v28M18 11v28" stroke="#dce8f8" strokeWidth="2" /><path d="M39 24l6-4v25l-6 5z" fill="#e04a70" stroke="#a81c48" strokeWidth="2" /></Svg>,
};

const Caret = () => (
  <svg viewBox="0 0 12 8" className="h-2 w-3 shrink-0" aria-hidden="true"><path d="M1 2h10L6 8z" fill="#fff" /><path d="M1 0h10L6 6z" fill="#474747" /></svg>
);

const IconBtn = ({ name, label, caret, wide = "w-11", caretW = "w-6", active }) => (
  <span className="flex shrink-0 items-center">
    <button aria-label={label || name} className={`flex h-10 items-center justify-center ${wide} ${active ? "rounded-sm border border-[#b98a4a] bg-linear-to-b from-[#fbd4a4] via-[#f7a84e] to-[#fde08a]" : ""}`}>{ic[name]}</button>
    {caret ? <button aria-label={`${label || name}, меню`} className={`flex h-10 items-center justify-center ${caretW}`}><Caret /></button> : null}
  </span>
);

const Big = ({ icon, lines, w, caret, hot }) => (
  <button className={`flex flex-col items-center gap-2 pt-2 text-[22px] leading-[26px] whitespace-nowrap text-black ${w}`}>
    {big[icon]}
    <span className="flex flex-col items-center">
      {lines.map((t, i) => (
        <span key={t} className="flex items-center gap-1">
          {hot && i === 0 ? <span><span className="underline decoration-2 underline-offset-4">{t[0]}</span>{t.slice(1)}</span> : t}
          {caret === "inline" && i === lines.length - 1 && <Caret />}
        </span>
      ))}
      {caret === "below" && <span className="flex h-6 items-center"><Caret /></span>}
    </span>
  </button>
);

const SmallGrid = ({ cols, className = "", items }) => (
  <div className={`grid auto-rows-[44px] items-center ${cols} ${className} pt-0.5`}>
    {items.map(([n, c], i) => (n ? <IconBtn key={i} name={n} caret={c} caretW="w-[26px]" /> : <span key={i} />))}
  </div>
);

const Panel = ({ title, children, pad }) => (
  <section aria-label={title} className="flex flex-col overflow-hidden rounded-md border border-[#8b8e93] bg-[linear-gradient(#f4f5f6_0px,#d9dce1_3px,#c9cdd5_27px,#b9c0cb_28px,#c6cbd2_75px,#d9dedf_110px,#e6ebeb_137px)] pt-px shadow-[1px_1px_0_#fff]">
    <div className={`flex h-[136px] ${pad}`}>{children}</div>
    <h2 className="h-8 bg-linear-to-b from-[#adb1af] to-[#949594] text-center text-[21px] leading-8 text-white">{title}</h2>
  </section>
);

const Collapsed = ({ title, w, children }) => (
  <button className={`flex flex-col items-center rounded-md border border-[#808387] bg-[linear-gradient(#f8f8f9_0px,#cfd3da_26px,#bcc3cf_28px,#c9cdd4_70px,#e2e4e6_110px,#ececec_160px)] pt-[11px] text-[22px] leading-[26px] whitespace-nowrap text-black ${w}`}>
    <span className="flex h-[62px] w-[60px] flex-col overflow-hidden rounded-lg border-2 border-[#a5a8ac] bg-[#eceef1]">
      <span className="flex flex-1 items-center justify-center">{children}</span>
      <span className="h-3.5 bg-[#c2c4c6]" />
    </span>
    <span className="mt-1.5">{title}</span>
    <span className="flex h-6 items-center"><Caret /></span>
  </button>
);

const Grip = () => (
  <span className="mr-2.5 ml-2 flex flex-col gap-[5px]" aria-hidden="true">
    {[0, 1, 2, 3].map((i) => <span key={i} className="h-1 w-1 bg-[#333] shadow-[1px_1px_0_#fff]" />)}
  </span>
);

const Sep = () => <span className="mx-2 h-8 w-0.5 border-r border-white bg-[#555]" />;

const More = () => (
  <button aria-label="Параметры панели" className="flex w-5 flex-col items-center justify-end self-stretch rounded-r-md bg-linear-to-b from-[#8a8e96] to-[#5a5e6b] pb-1">
    <svg viewBox="0 0 14 14" className="h-3.5 w-3.5" aria-hidden="true"><path d="M2 1h10v2H2zM6 6h6v3l-4 4H6l2-4H6z" fill="#fff" /></svg>
  </button>
);

const Toolbar = ({ label, items }) => (
  <div role="toolbar" aria-label={label} className="flex h-[49px] items-center overflow-hidden rounded-r-md rounded-l-sm bg-linear-to-b from-[#d1d4d9] via-[#bdc1c8] to-[#9a9fab]">
    <Grip />
    {items.map(([n, c, w, a], i) => (n === "|" ? <Sep key={i} /> : <IconBtn key={i} name={n} caret={c} caretW={w || "w-[25px]"} active={a} wide={n === "xz" || n === "xy" || n === "yz" || n === "starOff" ? "w-12" : "w-11"} />))}
    <span className="w-0.5" />
    <More />
  </div>
);

const QatEdge = () => (
  <svg viewBox="0 0 20 42" className="h-[42px] w-5 shrink-0" aria-hidden="true"><path d="M0 1h20v40h-1C19 24 14 8 0 1z" fill="url(#gQat)" /><path d="M20 1H0c14 7 19 23 19 40h1" fill="none" stroke="#a4a7ab" strokeWidth="2" /></svg>
);

const Chev = () => <svg viewBox="0 0 10 8" className="h-2 w-2.5" aria-hidden="true"><path d="M1 1l4 5 4-5" fill="none" stroke="#fff" strokeWidth="2" /></svg>;

const TABS = ["Расширенное редактирование", "Расчет", "Анализ", "Расширенный анализ", "Конструирование"];
const MAIN_TOOLS = [["starOff"], ["magNode", 1], ["frameRed"], ["magBar", 1], ["magV"], ["magH"], ["magAxes"], ["magGrid"], ["magPen", 1], ["plate"], ["funnel"], ["swap"], ["undoFrameOff"], ["brush"], ["|"], ["boxX1"], ["boxAxisOff"], ["boxX2"], ["undoBoxOff"], ["frame3d"], ["frame3dRed"], ["|"], ["mag"], ["magX"], ["|"], ["torch"], ["length", 1], ["pencil"], ["redPen"]];
const VIEW_TOOLS = [["axisXyz", 0, "", true], ["axisIso"], ["xz", 1, "w-[22px]"], ["xy", 1, "w-[22px]"], ["yz", 1, "w-[22px]"], ["slab"], ["spin", 1, "w-[22px]"], ["axisRed"]];
const CUBE_TOOLS = [["c0"], ["c1"], ["c2"], ["c3"], ["c4"], ["c5"], ["c6"], ["c7"], ["c8"]];

const StatusSelect = ({ label }) => (
  <span className="relative flex h-10 w-[111px] items-center border-2 border-[#8c8f92] bg-[#ebebeb]">
    <select aria-label={label} className="h-full w-full appearance-none bg-transparent pl-1 text-[22px] leading-8"><option>1.</option></select>
    <span className="pointer-events-none absolute right-2"><Caret /></span>
  </span>
);

const StatusText = ({ children, w }) => (
  <span className={`flex items-center border-l-4 border-[#2c2e30] pl-1.5 text-[21px] whitespace-nowrap text-black ${w}`}>{children}</span>
);

const Dialog = () => (
  <div role="dialog" aria-label="Языки" className="absolute top-[586px] left-1/2 w-[484px] -translate-x-1/2 border-2 border-[#6d6d6d] bg-[#f0f0f0] pb-2 font-['Liberation_Sans',sans-serif] text-[22px] leading-[26px] text-black shadow-[0_2px_14px_rgba(0,0,0,0.3)]">
    <div className="flex h-[50px] items-center justify-between bg-white pr-[22px] pl-1.5">
      <h1 className="pt-0.5 font-['Noto_Sans',sans-serif] text-[22px]">Языки</h1>
      <button aria-label="Закрыть" className="p-0.5"><svg viewBox="0 0 20 20" className="h-5 w-5" aria-hidden="true"><path d="M1 1l18 18M19 1L1 19" stroke="#111" strokeWidth="2" /></svg></button>
    </div>
    <form className="px-2.5 pt-[22px] pr-1" onSubmit={(e) => e.preventDefault()}>
      <fieldset className="h-[200px] border-2 border-[#dedede] pt-2">
        <label htmlFor="ui-lang" className="block pl-[11px]">Язык пользовательского интерфейса</label>
        <div className="relative mt-4 ml-[60px] w-[294px]">
          <select id="ui-lang" defaultValue="Русский" className="h-[42px] w-full appearance-none border-2 border-[#0f5a9c] bg-[#cce4f7] pt-0.5 pl-1.5">
            <option>Английский</option><option>Русский</option><option>Украинский</option>
          </select>
          <svg viewBox="0 0 18 12" className="pointer-events-none absolute top-[15px] right-2 h-3 w-[18px]" aria-hidden="true"><path d="M1 2l8 8 8-8" fill="none" stroke="#4a6274" strokeWidth="2" /></svg>
          <ul role="listbox" aria-label="Язык пользовательского интерфейса" className="absolute top-[42px] left-0 z-10 w-full border-2 border-[#1278d4] bg-white shadow-[5px_5px_4px_rgba(0,0,0,0.45)]">
            <li role="option" aria-selected="false" className="pl-1">Английский</li>
            <li role="option" aria-selected="true" className="bg-[#1278d4] pl-1 text-white">Русский</li>
            <li role="option" aria-selected="false" className="pl-1">Украинский</li>
          </ul>
        </div>
        <label htmlFor="doc-lang" className="mt-5 block pl-[19px]">Язык</label>
        <select id="doc-lang" defaultValue="Русский" className="mt-2 ml-[60px] block h-[42px] w-[294px] appearance-none border-2 border-[#b4b4b4] bg-[#e4e4e4] pt-1 pl-1.5">
          <option>Русский</option>
        </select>
      </fieldset>
      <div className="mt-[18px] flex justify-end gap-1 pr-1">
        <button aria-label="Применить" className="flex h-[42px] w-[62px] items-center justify-center border-2 border-[#adadad] bg-[#e3e3e3]">
          <svg viewBox="0 0 26 28" className="h-7 w-[26px]" aria-hidden="true"><path d="M1 15l5-3 4 7c2-8 7-14 14-18v9c-6 5-9 10-14 16z" fill="#7da33f" stroke="#3d5a20" strokeWidth="1.500" /></svg>
        </button>
        <button aria-label="Отмена" className="flex h-[42px] w-[62px] items-center justify-center border-2 border-[#adadad] bg-[#e3e3e3]">
          <svg viewBox="0 0 28 28" className="h-7 w-7" aria-hidden="true"><path d="M1 3l6-3 8 8 9-8h4L18 12l9 12-4 4-9-10-7 9-6-2 9-12z" fill="url(#gRed)" stroke="#8c1a1a" /></svg>
        </button>
      </div>
    </form>
  </div>
);

export default function App() {
  return (
    <div className="relative flex min-h-screen flex-col overflow-hidden bg-[#525252] font-['Noto_Sans','Open_Sans',sans-serif]">
      <Defs />
      <header className="relative">
        <div className="flex h-[60px] justify-between bg-white pl-[107px]">
          <div className="flex pt-2.5">
            <QatEdge />
            <div role="toolbar" aria-label="Быстрый доступ" className="flex h-[42px] items-center rounded-r-full border-2 border-l-0 border-[#a4a7ab] bg-linear-to-b from-[#e3e7ec] to-[#eef1f5] pr-3">
              <IconBtn name="page" label="Создать" caret caretW="w-[22px]" />
              <IconBtn name="open" label="Открыть" />
              <IconBtn name="disk" label="Сохранить" />
              <IconBtn name="undo" label="Отменить" caret caretW="w-6" />
              <IconBtn name="redo" label="Повторить" caret caretW="w-[22px]" />
              <IconBtn name="glassCube" />
              <IconBtn name="book" active />
              <IconBtn name="camera" />
              <IconBtn name="hand" caret caretW="w-[22px]" />
              <IconBtn name="plate" />
            </div>
            <button aria-label="Настройка панели" className="ml-5 flex h-[42px] flex-col items-center justify-center gap-1"><span className="h-0.5 w-2.5 bg-[#444]" /><Caret /></button>
          </div>
          <div className="flex">
            <button aria-label="Свернуть" className="flex w-[92px] items-center justify-center"><svg viewBox="0 0 20 20" className="h-5 w-5" aria-hidden="true"><path d="M0 10h20" stroke="#999" strokeWidth="2" /></svg></button>
            <button aria-label="Развернуть" className="flex w-[92px] items-center justify-center"><svg viewBox="0 0 20 20" className="h-5 w-5" fill="none" aria-hidden="true"><path d="M1 5h14v14H1zM5 5V1h14v14h-4" stroke="#999" strokeWidth="1.500" /></svg></button>
            <button aria-label="Закрыть" className="flex w-[98px] items-center justify-center"><svg viewBox="0 0 20 20" className="h-5 w-5" aria-hidden="true"><path d="M0 0l20 20M20 0L0 20" stroke="#999" strokeWidth="1.500" /></svg></button>
          </div>
        </div>
        <button aria-label="Меню приложения" className="absolute top-4 left-[23px]">
          <svg viewBox="0 0 76 76" className="h-[76px] w-[76px]" fill="none" aria-hidden="true">
            <circle cx="38" cy="38" r="36" fill="url(#gLogo)" stroke="#6c6f73" strokeWidth="2" />
            <g stroke="#2d7f9e" strokeWidth="5" strokeLinecap="round"><path d="M30 20c10 3 22-3 32-5M30 26c10 2 20 1 30-2" /><path d="M18 42c-10 1-12-12-5-14 8-1 13 4 15 12l3 16M31 30l3 14M41 28v16M49 28v16" /><path d="M56 30c11-4 14 16 4 17-8 0-6-8-1-8M33 44v20M41 44v22M49 44v19M56 46l-2 14" /></g>
            <g stroke="#7cc3da" strokeWidth="2.500" strokeLinecap="round"><path d="M30 19c10 3 22-3 32-5M30 25c10 2 20 1 30-2" /><path d="M18 41c-10 1-12-12-5-14 8-1 13 4 15 12l3 16M31 29l3 14M41 27v16M49 27v16" /><path d="M56 29c11-4 14 16 4 17-8 0-6-8-1-8M33 43v20M41 43v22M49 43v19M56 45l-2 14" /></g>
          </svg>
        </button>
        <nav className="flex h-[42px] items-stretch bg-[#505050] pl-[127px] text-[22px] text-white">
          <div role="tablist" className="flex">
            <button role="tab" aria-selected="true" className="mt-0.5 w-[365px] rounded-t-md border-x-2 border-t-2 border-[#cfe6ea] bg-linear-to-b from-[#f4f4f6] to-[#d3d6dc] whitespace-nowrap text-black">Создание и редактирование</button>
            <span className="w-2.5" />
            {TABS.map((t) => <button key={t} role="tab" aria-selected="false" className="px-[30px] pt-[3px] whitespace-nowrap">{t}</button>)}
          </div>
          <div className="ml-auto flex items-center gap-4 pr-2.5">
            <button className="flex items-center gap-[18px]">Стиль <Chev /></button>
            <button className="flex items-center gap-[18px]">Окно <Chev /></button>
            <button aria-label="Справка" className="flex items-center gap-4"><svg viewBox="0 0 18 28" className="h-7 w-[18px]" fill="none" aria-hidden="true"><path d="M3 8c0-7 12-7 12 0 0 5-6 5-6 11" stroke="#1c2a66" strokeWidth="6" /><path d="M3 8c0-7 12-7 12 0 0 5-6 5-6 11" stroke="#6f84c4" strokeWidth="2" /><circle cx="9" cy="25" r="3" fill="#1c2a66" /></svg><Chev /></button>
            <span className="flex items-center gap-[18px]">
              <button aria-label="Свернуть документ"><svg viewBox="0 0 20 20" className="h-5 w-5" aria-hidden="true"><path d="M3 14h14v4H3z" fill="#a8a8a8" /></svg></button>
              <button aria-label="Восстановить документ"><svg viewBox="0 0 20 20" className="h-5 w-5" fill="none" aria-hidden="true"><path d="M2 7h12v9H2zM6 6V3h12v9h-3" stroke="#a8a8a8" strokeWidth="2" /><path d="M1 7h14" stroke="#a8a8a8" strokeWidth="3" /></svg></button>
              <button aria-label="Закрыть документ"><svg viewBox="0 0 18 18" className="h-[18px] w-[18px]" aria-hidden="true"><path d="M2 1l14 16M16 1L2 17" stroke="#b8b8b8" strokeWidth="4" /></svg></button>
            </span>
          </div>
        </nav>
      </header>

      <div className="mx-0.5 mb-1 flex h-[181px] gap-2 rounded-md border-t border-b-2 border-[#e9ebed] bg-[linear-gradient(#d9dce1_0px,#cdd1d9_33px,#bbc2cd_35px,#c6cbd3_80px,#dde3e5_125px,#e9f3f3_165px)] px-[7px] pt-[5px] pb-0.5">
        <Panel title="Создание" pad="pl-[5px] pr-[13px]">
          <Big icon="node" w="w-[114px]" lines={["Добавить", "узел"]} caret="inline" />
          <Big icon="bar" w="w-[114px]" lines={["Добавить", "элемент"]} caret="inline" />
          <Big icon="sapfir" w="w-28" lines={["Создать в", "САПФИР"]} />
          <SmallGrid cols="grid-cols-[70px_70px_70px_44px]" items={[["frame", 1], ["cylinder", 1], ["dome"], ["dxf"], ["truss"], ["extrude", 1], ["mesh", 1], ["catenary"], ["building"], ["zfxy", 1], ["planeGrid", 1], [""]]} />
        </Panel>
        <Panel title="Редактирование" pad="pl-[19px] pr-3.5">
          <Big icon="copy" w="w-[148px]" lines={["Копирование"]} caret="below" hot />
          <Big icon="pack" w="w-[134px]" lines={["Упаковка", "схемы"]} />
          <Big icon="move" w="w-[154px]" lines={["Перемещение"]} caret="below" hot />
          <SmallGrid className="ml-3" cols="grid-cols-[70px_44px]" items={[["scissors"], ["number"], ["scale"], ["fit"], ["rotate", 1], ["cutPlate"]]} />
        </Panel>
        <Panel title="Жесткости и связи" pad="pl-3 pr-1.5">
          <Big icon="stiff" w="w-[130px]" lines={["Жесткости"]} caret="below" hot />
          <SmallGrid className="ml-1.5" cols="grid-cols-[70px_70px]" items={[["loads", 1], ["c1c2"], ["nodes"], ["twoColor", 1], ["support", 1], ["pile"]]} />
        </Panel>
        <Panel title="Конструирование" pad="pl-[13px] pr-2">
          <Big icon="hammer" w="w-[114px]" lines={["Варианты"]} hot />
          <Big icon="concrete" w="w-[100px]" lines={["Ж/б"]} hot />
          <Big icon="steel" w="w-[70px]" lines={["Сталь"]} hot />
          <span className="mx-3 my-3 w-0.5 border-r border-white bg-[#9a9da2]" />
          <Big icon="blocks" w="w-20" lines={["Блоки"]} />
          <SmallGrid className="ml-1" cols="grid-cols-[51px_70px]" items={[["barPlus"], ["tBeam"], ["barsPlus"], ["tpBeam", 1], ["nodePlus"], [""]]} />
        </Panel>
        <Collapsed title="Нагрузки" w="w-[107px]"><Svg><Numbering /></Svg></Collapsed>
        <Collapsed title="Инструменты" w="w-[152px]">
          <Svg><path d="M0 3h32v8H0z" fill="#333" /><path d="M1 4h7v6H1z" fill="#e02a2a" /><path d="M8 4h6v6H8z" fill="#f2c81c" /><path d="M14 4h8v6h-8z" fill="#2ba8e0" /><path d="M22 4h9v6h-9z" fill="#7a3aa0" /><path d="M2 16h16" stroke="#666" strokeWidth="2" strokeDasharray="2 2" /><path d="M20 13l11 12h-5l3 6-3 1-3-6-3 3z" fill="#3a3a3a" /></Svg>
        </Collapsed>
      </div>

      <main className="flex flex-1 gap-2">
        <section aria-label="Расчетная схема" className="relative flex-1 border-t-2 border-l-4 border-t-[#8a8a8a] border-l-[#8a8a8a] bg-white pt-1.5 pl-1.5 font-['Liberation_Serif',serif] text-[24px] leading-8 text-black">
          Загружение 1
          <span className="absolute top-[139px] left-[1296px] h-2.5 w-2.5 bg-[#8a2be2]" />
          <span className="absolute bottom-[140px] left-[840px] h-1.5 w-1.5 bg-[#35e02c]" />
          <svg viewBox="0 0 84 90" className="absolute bottom-[52px] left-[66px] h-[90px] w-[84px] overflow-visible" fill="none" aria-hidden="true">
            <g fontFamily="Noto Sans" fontWeight="bold" fontSize="33"><text x="3" y="28" fill="#ef1a1a">Z</text><text x="24" y="40" fill="#1f2ff0">Y</text><text x="52" y="78" fill="#1a7f1a">X</text></g>
            <path d="M15 79V41M9 50l6-9 6 9" stroke="#ef1a1a" strokeWidth="2" /><path d="M16 78l15-27M20 56l11-5v11" stroke="#1f2ff0" strokeWidth="2" /><path d="M15 79h35M43 72l7 7-7 6" stroke="#1a7f1a" strokeWidth="2" />
          </svg>
          <span className="absolute bottom-[27px] left-[164px]">Отм. 0.000</span>
        </section>
        <aside aria-label="Книга отчетов" className="mr-0.5 flex w-[397px] flex-col">
          <div className="flex h-10 items-center justify-between border-t-2 border-[#e8e8e8] bg-[#999b9a] px-2 text-[22px] leading-8 text-[#3c3c3c]">
            <h2>Книга отчетов</h2>
            <button aria-label="Закрыть панель"><svg viewBox="0 0 16 16" className="h-4 w-4" aria-hidden="true"><path d="M1 1l14 14M15 1L1 15" stroke="#444" strokeWidth="3" /></svg></button>
          </div>
          <div role="toolbar" aria-label="Отчеты" className="flex h-[46px] bg-[#525252]">
            <div className="flex flex-1 items-center rounded-md bg-linear-to-b from-[#cfd2d6] to-[#9a9fab] pl-1.5">
              <IconBtn name="camera" caret caretW="w-[22px]" /><IconBtn name="folderUp" />
              <span className="w-1.5" />
              <IconBtn name="props" caret caretW="w-[22px]" />
              <IconBtn name="diskOff" /><IconBtn name="scissorsOff" /><IconBtn name="copyOff" /><IconBtn name="paste" />
            </div>
            <button aria-label="Другие команды" className="w-[18px] bg-linear-to-b from-[#8a8e96] to-[#4a4e5c] pb-4 text-[22px] leading-5 font-bold text-white">»</button>
          </div>
          <div className="mt-1 flex-1 border-t-2 border-l-2 border-[#8a8a8a] bg-white" />
        </aside>
      </main>

      <div className="mt-0.5 flex gap-1">
        <Toolbar label="Выбор" items={MAIN_TOOLS} />
        <Toolbar label="Проекции" items={VIEW_TOOLS} />
      </div>
      <div className="mt-0.5 mb-0.5 flex"><Toolbar label="Виды" items={CUBE_TOOLS} /></div>

      <footer className="flex h-[50px]">
        <div className="flex flex-1 flex-col justify-end border-t border-[#333] bg-[linear-gradient(#454852_0px,#3e414b_15px,#2f2f2f_16px,#343434_100%)] pl-24">
          <span className="h-0.5 w-[688px] bg-[#c4bfc2]" />
        </div>
        <div className="flex w-[1145px] items-stretch border-t-2 border-l-4 border-[#1f1f1f] bg-[linear-gradient(#d0d0d0_0px,#bdbdbd_13px,#9c9c9c_14px,#6b7476_46px)] pt-1 pb-0.5">
          <div className="ml-3 flex h-10 items-stretch gap-px bg-[#c8cccc]">
            <button aria-label="Нагрузки" className="flex w-11 items-center justify-center bg-[#e2e6e6]"><Svg><Numbering /></Svg></button>
            <button aria-label="Следующее" className="flex w-[47px] items-center justify-center bg-[#e2e6e6]"><Svg size="w-7 h-6" box="0 0 28 24"><path d="M14 3l11 17H3z" fill="#4d8a50" stroke="#2c5c30" strokeWidth="1.500" /></Svg></button>
            <button aria-label="Предыдущее" className="flex w-[47px] items-center justify-center bg-[#e2e6e6]"><Svg size="w-7 h-6" box="0 0 28 24"><path d="M1 4h26L18 21h-8z" fill="#a3a5a6" /></Svg></button>
          </div>
          <StatusSelect label="Загружение" />
          <span className="mx-1.5 w-1 bg-[#2c2e30]" />
          <button aria-label="Варианты" className="flex h-10 w-[46px] items-center justify-center bg-[#e2e6e6]"><Svg box={LB}><Hammer /></Svg></button>
          <StatusSelect label="Вариант" />
          <span className="w-1" />
          <StatusText w="w-[268px]">Уз.: 0 / 2</StatusText>
          <StatusText w="w-[267px]">Эл.: 0 / 0</StatusText>
          <StatusText w="flex-1">Загр.: 1 / 1</StatusText>
        </div>
      </footer>

      <Dialog />
    </div>
  );
}
